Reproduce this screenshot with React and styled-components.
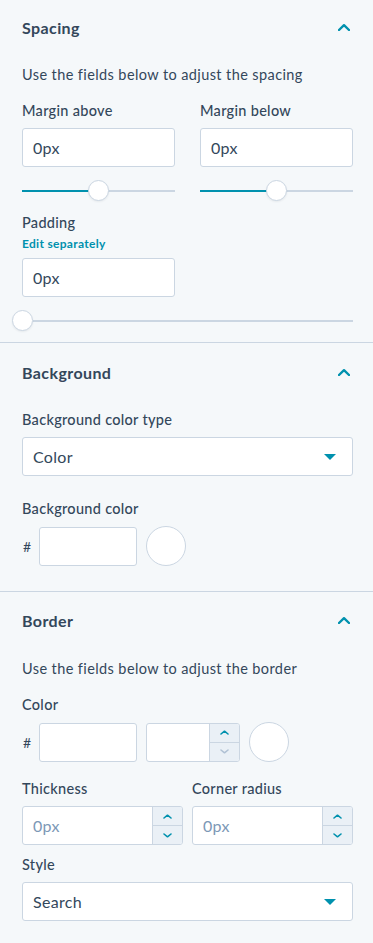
import React from "react";
import styled, { createGlobalStyle } from "styled-components";

const Global = createGlobalStyle`
  html, body { margin: 0; padding: 0; background: #f5f8fa; }
  body { font-family: Lato, "Open Sans", sans-serif; color: #33475b; -webkit-font-smoothing: antialiased; }
  * { box-sizing: border-box; }
`;

const Panel = styled.div`
  width: 373px;
  min-height: 943px;
  background: #f5f8fa;
  display: flex;
  flex-direction: column;
`;

const Section = styled.section`
  display: flex;
  flex-direction: column;
  padding: 0 20px ${(p) => p.$pb || 0}px 22px;
  border-bottom: ${(p) => (p.$divider ? "1px solid #cbd6e2" : "none")};
`;

const Header = styled.div`
  height: ${(p) => p.$h}px;
  display: flex;
  align-items: center;
  justify-content: space-between;
  padding-right: 3px;
`;

const Title = styled.h2`
  margin: 0;
  font-size: 16px;
  font-weight: 700;
  letter-spacing: 0.4px;
  color: #33475b;
`;

const Text = styled.p`
  margin: ${(p) => p.$mt || 0}px 0 0;
  font-size: 14.5px;
  letter-spacing: 0.4px;
  line-height: 20px;
`;

const Label = styled.label`
  display: block;
  margin-top: ${(p) => p.$mt || 0}px;
  font-size: 14.5px;
  letter-spacing: 0.3px;
  line-height: 20px;
  font-weight: 500;
  color: #33475b;
`;

const LinkText = styled.a`
  display: block;
  margin-top: 3px;
  font-size: 12px;
  letter-spacing: 0.3px;
  line-height: 16px;
  font-weight: 700;
  color: #0091ae;
`;

const Grid = styled.div`
  display: grid;
  grid-template-columns: 1fr 1fr;
  column-gap: ${(p) => p.$gap}px;
  margin-top: ${(p) => p.$mt || 0}px;
`;

const Field = styled.div`
  display: flex;
  flex-direction: column;
`;

const Input = styled.div`
  margin-top: ${(p) => p.$mt ?? 7}px;
  width: ${(p) => (p.$w ? p.$w + "px" : "100%")};
  height: 39px;
  background: #fff;
  border: 1px solid #cbd6e2;
  border-radius: 3px;
  display: flex;
  align-items: center;
  padding-left: 10px;
  font-size: 16px;
  letter-spacing: 0.3px;
  color: #33475b;
  flex-shrink: 0;
`;

const Select = styled(Input)`
  justify-content: space-between;
  padding-right: 16px;
`;

const SliderWrap = styled.div`
  position: relative;
  margin-top: 13px;
  height: 21px;
`;

const Track = styled.div`
  position: absolute;
  left: 0;
  right: 0;
  top: 10px;
  height: 2px;
  background: #cbd6e2;
`;

const Fill = styled.div`
  position: absolute;
  left: 0;
  top: 10px;
  height: 2px;
  background: #0091ae;
`;

const Thumb = styled.div`
  position: absolute;
  top: 0;
  width: 21px;
  height: 21px;
  margin-left: -10.5px;
  border-radius: 50%;
  background: #fff;
  border: 1px solid #cbd6e2;
  box-shadow: 0 1px 2px rgba(45, 62, 80, 0.08);
`;

const ColorRow = styled.div`
  display: flex;
  align-items: center;
  margin-top: 7px;
  gap: 9px;
`;

const Hash = styled.span`
  width: 7px;
  margin-left: 1px;
  font-size: 14px;
  color: #33475b;
`;

const Swatch = styled.div`
  width: 40px;
  height: 40px;
  border-radius: 50%;
  background: #fff;
  border: 1px solid #cbd6e2;
  flex-shrink: 0;
`;

const Stepper = styled.div`
  margin-top: ${(p) => p.$mt ?? 0}px;
  width: ${(p) => (p.$w ? p.$w + "px" : "100%")};
  height: 39px;
  display: flex;
  border: 1px solid #cbd6e2;
  border-radius: 3px;
  background: #fff;
  overflow: hidden;
  flex-shrink: 0;
`;

const StepValue = styled.div`
  flex: 1;
  display: flex;
  align-items: center;
  padding-left: 10px;
  font-size: 16px;
  letter-spacing: 0.3px;
  color: #7c98b6;
`;

const StepButtons = styled.div`
  width: 30px;
  display: flex;
  flex-direction: column;
  border-left: 1px solid #cbd6e2;
  background: #eaf0f6;
`;

const StepBtn = styled.div`
  flex: 1;
  display: flex;
  align-items: center;
  justify-content: center;
  & + & { border-top: 1px solid #cbd6e2; }
`;

const Chevron = ({ up = true, color = "#0091ae", w = 12, h = 7, sw = 2.4 }) => (
  <svg width={w} height={h} viewBox={`0 0 ${w} ${h}`} fill="none">
    <polyline
      points={up ? `1,${h - 1} ${w / 2},1.2 ${w - 1},${h - 1}` : `1,1 ${w / 2},${h - 1.2} ${w - 1},1`}
      stroke={color}
      strokeWidth={sw}
      strokeLinecap="round"
      strokeLinejoin="round"
    />
  </svg>
);

const Caret = () => (
  <svg width="12" height="6" viewBox="0 0 12 6">
    <polygon points="0,0 12,0 6,6" fill="#0091ae" />
  </svg>
);

const Slider = ({ value }) => (
  <SliderWrap>
    <Track />
    <Fill style={{ width: `${value}%` }} />
    <Thumb style={{ left: `${value}%` }} />
  </SliderWrap>
);

const NumberStepper = ({ value, w, mt, downDisabled }) => (
  <Stepper $w={w} $mt={mt}>
    <StepValue>{value}</StepValue>
    <StepButtons>
      <StepBtn>
        <Chevron w={9} h={5} sw={1.6} />
      </StepBtn>
      <StepBtn>
        <Chevron up={false} w={9} h={5} sw={1.6} color={downDisabled ? "#b0c1d4" : "#0091ae"} />
      </StepBtn>
    </StepButtons>
  </Stepper>
);

export default function App() {
  return (
    <Panel>
      <Global />
      <Section $divider $pb={11}>
        <Header $h={54}>
          <Title>Spacing</Title>
          <Chevron />
        </Header>
        <Text $mt={11}>Use the fields below to adjust the spacing</Text>
        <Grid $gap={25} $mt={16}>
          <Field>
            <Label>Margin above</Label>
            <Input>0px</Input>
            <Slider value={50} />
          </Field>
          <Field>
            <Label>Margin below</Label>
            <Input>0px</Input>
            <Slider value={50} />
          </Field>
        </Grid>
        <Label $mt={12}>Padding</Label>
        <LinkText>Edit separately</LinkText>
        <Input $w={153} $mt={6}>0px</Input>
        <SliderWrap>
          <Track style={{ left: 11 }} />
          <Thumb style={{ left: 0 }} />
        </SliderWrap>
      </Section>

      <Section $divider $pb={25}>
        <Header $h={58}>
          <Title>Background</Title>
          <Chevron />
        </Header>
        <Label $mt={9}>Background color type</Label>
        <Select>
          Color
          <Caret />
        </Select>
        <Label $mt={23}>Background color</Label>
        <ColorRow>
          <Hash>#</Hash>
          <Input $w={98} $mt={0} />
          <Swatch />
        </ColorRow>
      </Section>

      <Section>
        <Header $h={56}>
          <Title>Border</Title>
          <Chevron />
        </Header>
        <Text $mt={11}>Use the fields below to adjust the border</Text>
        <Label $mt={16}>Color</Label>
        <ColorRow>
          <Hash>#</Hash>
          <Input $w={98} $mt={0} />
          <NumberStepper value="" w={94} mt={0} downDisabled />
          <Swatch />
        </ColorRow>
        <Grid $gap={9} $mt={17}>
          <Field>
            <Label>Thickness</Label>
            <NumberStepper value="0px" mt={7} />
          </Field>
          <Field>
            <Label>Corner radius</Label>
            <NumberStepper value="0px" mt={7} />
          </Field>
        </Grid>
        <Label $mt={10}>Style</Label>
        <Select>
          Search
          <Caret />
        </Select>
      </Section>
    </Panel>
  );
}
